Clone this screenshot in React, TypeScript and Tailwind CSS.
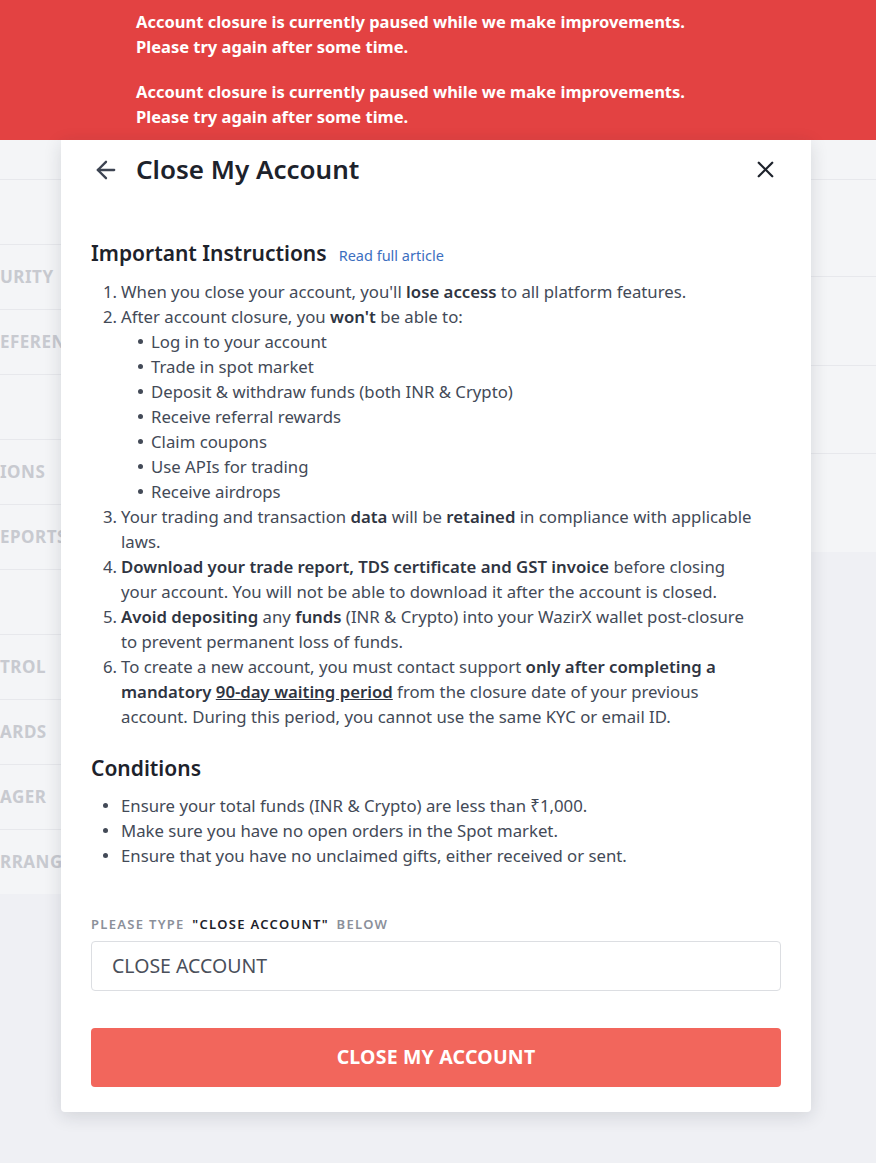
import React from 'react';
import { ArrowLeft, X } from 'lucide-react';

const sideRows = ['', 'URITY', 'EFERENCES', '', 'IONS', 'EPORTS', '', 'TROL', 'ARDS', 'AGER', 'RRANGEMENTS'];
const rightRows = ['h-[97px]', 'h-[89px]', 'h-[88px]', 'h-[99px]'];

const cannotDo = [
  'Log in to your account',
  'Trade in spot market',
  'Deposit & withdraw funds (both INR & Crypto)',
  'Receive referral rewards',
  'Claim coupons',
  'Use APIs for trading',
  'Receive airdrops',
];

const conditions = [
  'Ensure your total funds (INR & Crypto) are less than ₹1,000.',
  'Make sure you have no open orders in the Spot market.',
  'Ensure that you have no unclaimed gifts, either received or sent.',
];

const B: React.FC<{ children: React.ReactNode }> = ({ children }) => (
  <span className="font-semibold text-[#2f3542]">{children}</span>
);

const Banner = () => (
  <div className="h-[140px] bg-[#e34242] pl-[136px] pt-[9px] text-[16.5px] leading-[25px] font-bold text-white">
    <p>Account closure is currently paused while we make improvements.</p>
    <p>Please try again after some time.</p>
    <p className="mt-[20px]">Account closure is currently paused while we make improvements.</p>
    <p>Please try again after some time.</p>
  </div>
);

const CloseAccountModal = () => (
  <div className="absolute left-[61px] top-[140px] w-[750px] h-[972px] bg-white rounded-b-[4px] shadow-[0_4px_18px_rgba(30,35,50,0.14)] px-[30px]">
    <div className="flex items-center h-[59px]">
      <ArrowLeft className="w-[28px] h-[28px] ml-[1px] text-[#3d4452]" strokeWidth={2} />
      <h2 className="ml-[16px] text-[26px] font-semibold text-[#1d222b]">Close My Account</h2>
      <X className="ml-auto mr-[2px] w-[27px] h-[27px] text-[#1d222b]" strokeWidth={2} />
    </div>

    <div className="mt-[39px] flex items-baseline gap-[12px]">
      <h3 className="text-[21px] font-semibold text-[#1d222b]">Important Instructions</h3>
      <a className="text-[14.5px] text-[#3c6fbf]">Read full article</a>
    </div>

    <ol className="mt-[9px] pl-[12px] text-[16.75px] leading-[25px] text-[#434a57]">
      <li className="flex">
        <span className="w-[18px] shrink-0">1.</span>
        <span>When you close your account, you'll <B>lose access</B> to all platform features.</span>
      </li>
      <li className="flex">
        <span className="w-[18px] shrink-0">2.</span>
        <div>
          <span>After account closure, you <B>won't</B> be able to:</span>
          <ul className="pl-[17px]">
            {cannotDo.map(item => (
              <li key={item} className="flex items-center">
                <span className="w-[5px] h-[5px] rounded-full bg-[#434a57] mr-[8px]" />
                {item}
              </li>
            ))}
          </ul>
        </div>
      </li>
      <li className="flex">
        <span className="w-[18px] shrink-0">3.</span>
        <span className="pr-[28px]">Your trading and transaction <B>data</B> will be <B>retained</B> in compliance with applicable laws.</span>
      </li>
      <li className="flex">
        <span className="w-[18px] shrink-0">4.</span>
        <span className="pr-[28px]"><B>Download your trade report, TDS certificate and GST invoice</B> before closing your account. You will not be able to download it after the account is closed.</span>
      </li>
      <li className="flex">
        <span className="w-[18px] shrink-0">5.</span>
        <span className="pr-[28px]"><B>Avoid depositing</B> any <B>funds</B> (INR &amp; Crypto) into your WazirX wallet post-closure to prevent permanent loss of funds.</span>
      </li>
      <li className="flex">
        <span className="w-[18px] shrink-0">6.</span>
        <span className="pr-[28px]">To create a new account, you must contact support <B>only after completing a mandatory <span className="underline">90-day waiting period</span></B> from the closure date of your previous account. During this period, you cannot use the same KYC or email ID.</span>
      </li>
    </ol>

    <h3 className="mt-[24px] text-[21px] font-semibold text-[#1d222b]">Conditions</h3>
    <ul className="mt-[9px] pl-[12px] text-[16.75px] leading-[25px] text-[#434a57]">
      {conditions.map(item => (
        <li key={item} className="flex items-center">
          <span className="w-[5px] h-[5px] rounded-full bg-[#434a57] mr-[13px]" />
          {item}
        </li>
      ))}
    </ul>

    <p className="mt-[47px] text-[13px] font-semibold tracking-[1.3px] text-[#8b909a]">
      PLEASE TYPE <span className="ml-[3px] mr-[3px] text-[#1d222b]">"CLOSE ACCOUNT"</span> BELOW
    </p>
    <div className="mt-[6px] h-[50px] border border-[#dcdee2] rounded-[4px] flex items-center px-[20px] text-[19.5px] text-[#4a4f5a]">
      CLOSE ACCOUNT
    </div>
    <button className="mt-[37px] w-full h-[59px] rounded-[4px] bg-[#f2665c] text-white font-bold text-[19.5px] tracking-[0.2px]">
      CLOSE MY ACCOUNT
    </button>
  </div>
);

export default function App() {
  return (
    <div className="relative h-[1163px] overflow-hidden bg-[#eff0f4]" style={{ fontFamily: '"Noto Sans", "Open Sans", sans-serif' }}>
      <Banner />
      <div className="flex justify-between">
        <div className="w-[240px] h-[754px] bg-[#f4f5f7]">
          <div className="h-[39px]" />
          {sideRows.map((label, i) => (
            <div key={i} className="h-[65px] border-t border-[#e7e8ec] flex items-center text-[17px] font-bold tracking-[0.5px] text-[#c8cad0] whitespace-nowrap overflow-hidden">
              {label}
            </div>
          ))}
        </div>
        <div className="w-[600px] h-[412px] bg-[#f4f5f7]">
          <div className="h-[39px]" />
          {rightRows.map((h, i) => (
            <div key={i} className={`${h} border-t border-[#e7e8ec]`} />
          ))}
        </div>
      </div>
      <CloseAccountModal />
    </div>
  );
}
